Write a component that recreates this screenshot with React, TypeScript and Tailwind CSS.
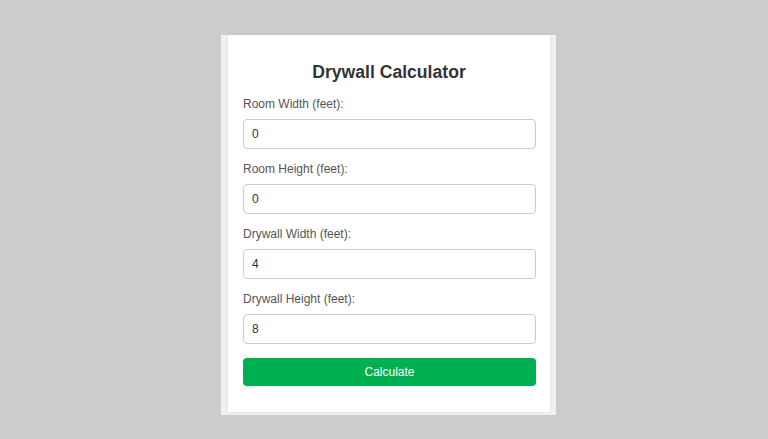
import React from 'react';

const fields = [
  { label: 'Room Width (feet):', value: '0' },
  { label: 'Room Height (feet):', value: '0' },
  { label: 'Drywall Width (feet):', value: '4' },
  { label: 'Drywall Height (feet):', value: '8' },
];

export default function App() {
  return (
    <div className="w-[768px] h-[439px] bg-[#cccccc] pt-[35px] pl-[221px] font-['Liberation_Sans',Arial,sans-serif]">
      <div className="w-[335px] h-[380px] bg-[#f1f1f1] pl-[7px]">
        {/* card */}
        <div className="w-[322px] h-[377px] bg-white shadow-[0_0_4px_rgba(0,0,0,0.08)] px-[15px] pt-[27px]">
          <h2 className="text-[17.6px] leading-[21px] font-bold text-[#333] text-center mb-[14px]">
            Drywall Calculator
          </h2>
          {fields.map(f => (
            <div key={f.label} className="mb-[13px]">
              <label className="block text-[12px] leading-[14px] text-[#555] mb-[8px]">{f.label}</label>
              <input
                type="number"
                defaultValue={f.value}
                className="block w-[293px] h-[30px] border border-[#cccccc] rounded-[4px] px-[8px] text-[12px] text-[#333] outline-none"
              />
            </div>
          ))}
          <button className="block w-[293px] h-[28px] mt-[14px] bg-[#00b050] rounded-[4px] text-white text-[12px]">
            Calculate
          </button>
        </div>
      </div>
    </div>
  );
}
